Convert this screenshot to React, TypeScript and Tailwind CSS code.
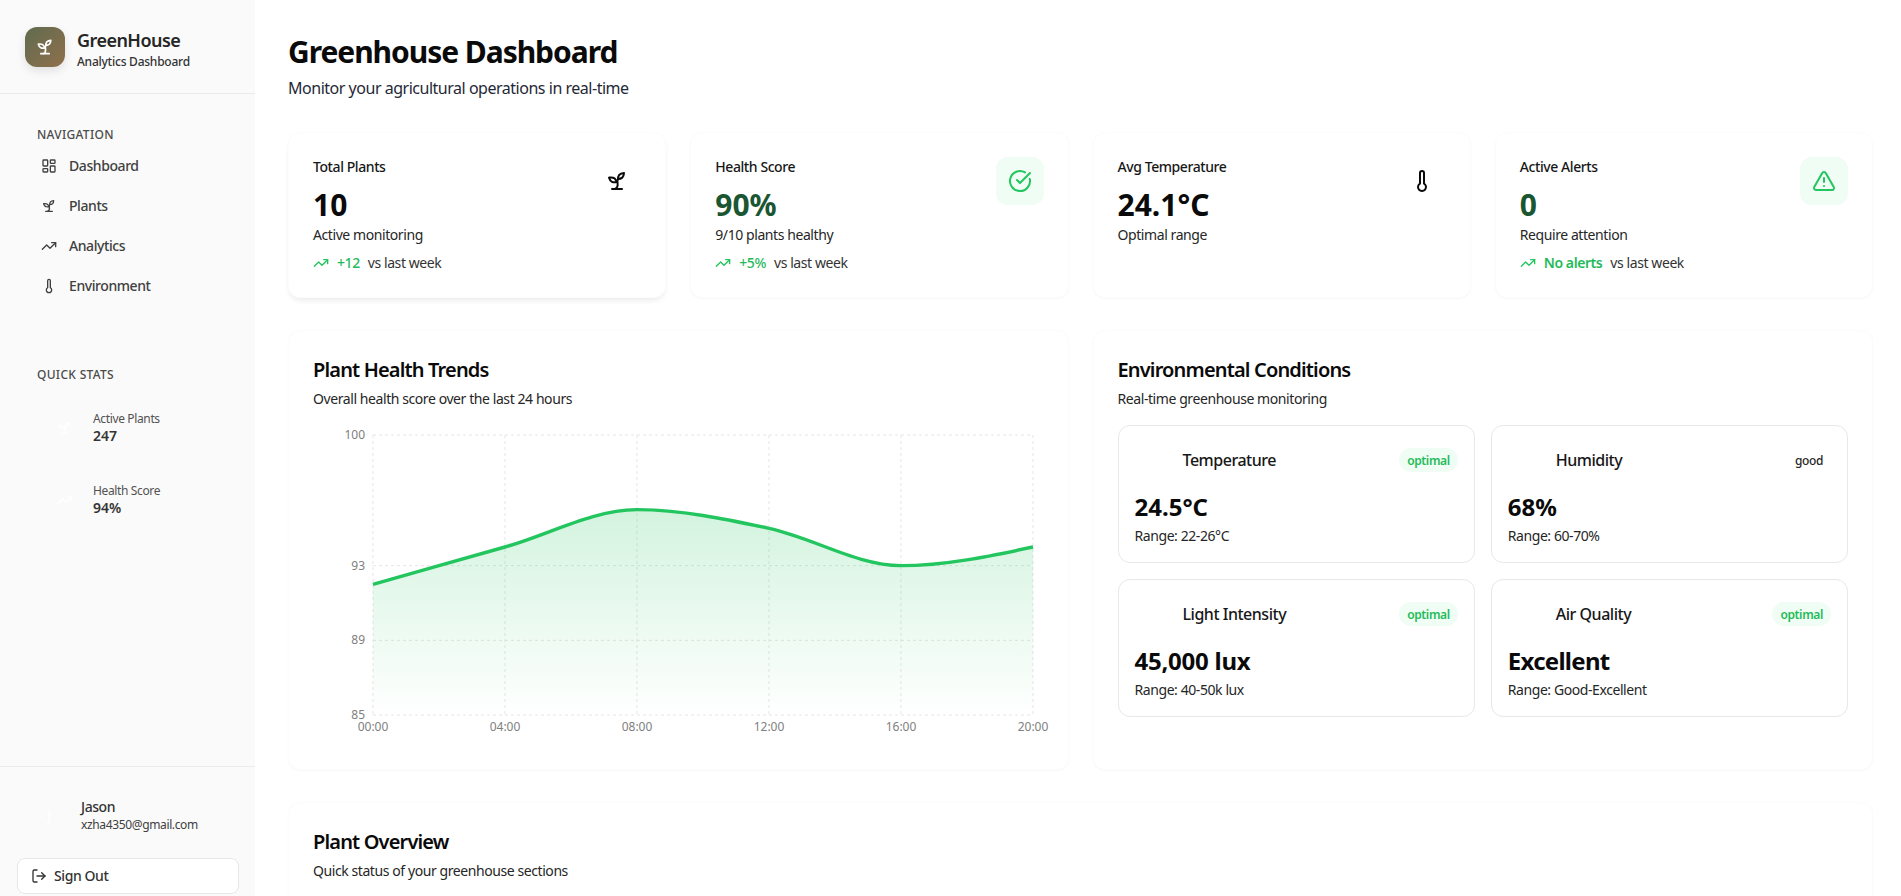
import React from "react";
import {
  LayoutDashboard,
  TrendingUp,
  Thermometer,
  CircleCheckBig,
  TriangleAlert,
  LogOut,
  Droplets,
  Sun,
  Wind,
} from "lucide-react";

function Sprout({ className }: { className?: string }) {
  return (
    <svg
      xmlns="http://www.w3.org/2000/svg"
      viewBox="0 0 24 24"
      fill="none"
      stroke="currentColor"
      strokeWidth="2"
      strokeLinecap="round"
      strokeLinejoin="round"
      className={className}
    >
      <path d="M7 20h10" />
      <path d="M10 20c5.5-2.5.8-6.4 3-10" />
      <path d="M9.5 9.4c1.1.8 1.8 2.2 2.3 3.7-2 .4-3.5.4-4.8-.3-1.2-.6-2.3-1.9-3-4.2 2.8-.5 4.4 0 5.5.8z" />
      <path d="M14.1 6a7 7 0 0 0-1.1 4c1.9-.1 3.3-.6 4.3-1.4 1-1 1.6-2.3 1.7-4.6-2.7.1-4 1-4.9 2z" />
    </svg>
  );
}

const nav = [
  { label: "Dashboard", Icon: LayoutDashboard },
  { label: "Plants", Icon: Sprout },
  { label: "Analytics", Icon: TrendingUp },
  { label: "Environment", Icon: Thermometer },
];

function StatCard({
  title,
  value,
  sub,
  green,
  Icon,
  boxed,
  trend,
  trendBold,
  raised,
}: {
  title: string;
  value: string;
  sub: string;
  green?: boolean;
  Icon: React.ComponentType<{ className?: string }>;
  boxed?: boolean;
  trend?: string;
  trendBold?: boolean;
  raised?: boolean;
}) {
  return (
    <div
      className={
        raised
          ? "flex h-[166px] justify-between rounded-xl border border-[#fcfcfc] bg-white p-6 shadow-[0_4px_6px_-2px_rgba(0,0,0,0.09)]"
          : "flex h-[166px] justify-between rounded-xl border border-[#fcfcfc] bg-white p-6 shadow-[0_1px_2px_rgba(0,0,0,0.03)]"
      }
    >
      <div>
        <div className="text-sm font-medium leading-5 text-[#171717]">{title}</div>
        <div
          className={
            green
              ? "mt-[10px] text-3xl font-bold leading-9 !tracking-normal text-[#1a5632]"
              : "mt-[10px] text-3xl font-bold leading-9 !tracking-normal text-[#0a0a0a]"
          }
        >
          {value}
        </div>
        <div className="mt-[2px] text-sm leading-5 text-[#262626]">{sub}</div>
        {trend && (
          <div className="mt-2 flex items-center text-sm leading-5">
            <TrendingUp className="h-4 w-4 text-[#22c55e]" />
            <span
              className={
                trendBold
                  ? "ml-2 font-semibold text-[#1fbb5a]"
                  : "ml-2 font-medium text-[#1fbb5a]"
              }
            >
              {trend}
            </span>
            <span className="ml-2 text-[#333333]">vs last week</span>
          </div>
        )}
      </div>
      <div
        className={
          boxed
            ? "flex h-12 w-12 items-center justify-center rounded-xl bg-[#f0fdf4] text-[#22c55e]"
            : "flex h-12 w-12 items-center justify-center rounded-xl text-[#0a0a0a]"
        }
      >
        <Icon className="h-6 w-6" />
      </div>
    </div>
  );
}

function EnvCard({
  label,
  value,
  range,
  status,
  Icon,
  valueClass,
}: {
  label: string;
  value: string;
  range: string;
  status: string;
  Icon: React.ComponentType<{ className?: string }>;
  valueClass: string;
}) {
  return (
    <div className="h-[138px] rounded-xl border border-[#e8e8e8] bg-white p-4">
      <div className="flex h-9 items-center justify-between">
        <div className="flex items-center gap-3">
          <div className="flex h-9 w-9 items-center justify-center text-white">
            <Icon className="h-5 w-5" />
          </div>
          <span className="text-base font-medium text-[#171717]">{label}</span>
        </div>
        <span
          className={
            status === "optimal"
              ? "rounded-full bg-[#f0fdf4] px-2 pb-[2px] pt-[4px] text-xs font-semibold leading-[18px] text-[#1fbb5a]"
              : "rounded-full px-2 pb-[2px] pt-[4px] text-xs font-medium leading-[18px] text-[#262626]"
          }
        >
          {status}
        </span>
      </div>
      <div className={valueClass}>{value}</div>
      <div className="mt-[3px] text-sm leading-5 text-[#262626]">{range}</div>
    </div>
  );
}

function Chart() {
  const xs = [373, 505, 637, 769, 901, 1033];
  const ys = [
    { y: 435, l: "100" },
    { y: 565.67, l: "93" },
    { y: 640.33, l: "89" },
    { y: 715, l: "85" },
  ];
  const times = ["00:00", "04:00", "08:00", "12:00", "16:00", "20:00"];
  const line =
    "M373,584.33C417,571.89,461,559.44,505,547C549,534.56,593,509.67,637,509.67C681,509.67,725,519,769,528.33C813,537.67,857,565.67,901,565.67C945,565.67,989,556.33,1033,547";
  return (
    <svg viewBox="313 425 731 320" className="block h-[320px] w-[731px] overflow-visible">
      <defs>
        <linearGradient id="healthFill" x1="0" y1="509" x2="0" y2="715" gradientUnits="userSpaceOnUse">
          <stop offset="0" stopColor="#22c55e" stopOpacity="0.2" />
          <stop offset="1" stopColor="#22c55e" stopOpacity="0" />
        </linearGradient>
      </defs>
      {xs.map((x) => (
        <line key={x} x1={x} x2={x} y1={435} y2={715} stroke="#e5e5e5" strokeDasharray="3 3" />
      ))}
      {ys.map((t) => (
        <line key={t.l} x1={373} x2={1033} y1={t.y} y2={t.y} stroke="#e5e5e5" strokeDasharray="3 3" />
      ))}
      <path d={`${line}L1033,715L373,715Z`} fill="url(#healthFill)" />
      <path d={line} fill="none" stroke="#22c55e" strokeWidth="3.4" />
      {ys.map((t) => (
        <text key={t.l} x={365} y={t.y + 4} textAnchor="end" fontSize="12" fill="#808080" className="!tracking-normal">
          {t.l}
        </text>
      ))}
      {times.map((t, i) => (
        <text key={t} x={xs[i]} y={731} textAnchor="middle" fontSize="12" fill="#808080" className="!tracking-normal">
          {t}
        </text>
      ))}
    </svg>
  );
}

export default function App() {
  return (
    <div className="flex h-screen overflow-hidden bg-white font-['Noto_Sans','Liberation_Sans',sans-serif] text-[#0a0a0a] [&_*]:tracking-[-0.03em]">
      <aside className="flex h-full w-[255px] shrink-0 flex-col bg-[#fafafa]">
        <div className="flex h-[94px] items-center gap-3 border-b border-[#ebebeb] px-[25px]">
          <div className="flex h-10 w-10 items-center justify-center rounded-xl bg-gradient-to-br from-[#5f6b4f] to-[#8f6f4c] shadow-[0_4px_10px_rgba(0,0,0,0.1)]">
            <Sprout className="h-5 w-5 text-white" />
          </div>
          <div className="pt-1">
            <div className="text-lg font-semibold leading-6 text-[#262626]">GreenHouse</div>
            <div className="mt-[2px] text-xs font-medium leading-4 !tracking-[-0.02em] text-[#333333]">Analytics Dashboard</div>
          </div>
        </div>

        <div className="px-[37px] pt-[33px]">
          <div className="text-xs font-medium uppercase leading-4 !tracking-wide text-[#4b4b4b]">Navigation</div>
          <div className="mt-[3px] flex flex-col">
            {nav.map(({ label, Icon }) => (
              <div key={label} className="flex h-10 items-center gap-3 pl-1">
                <Icon className="h-4 w-4 text-[#404040]" />
                <span className="text-sm font-medium text-[#404040]">{label}</span>
              </div>
            ))}
          </div>

          <div className="mt-[61px] text-xs font-medium uppercase leading-4 !tracking-wide text-[#4b4b4b]">
            Quick Stats
          </div>
          <div className="mt-[26px] flex flex-col gap-[35px]">
            <div className="flex items-center gap-3 pl-3">
              <div className="flex h-8 w-8 items-center justify-center text-white">
                <Sprout className="h-4 w-4" />
              </div>
              <div className="pt-[2px]">
                <div className="-mb-px text-xs leading-4 text-[#525252]">Active Plants</div>
                <div className="text-sm font-semibold leading-5 !tracking-normal text-[#333333]">247</div>
              </div>
            </div>
            <div className="flex items-center gap-3 pl-3">
              <div className="flex h-8 w-8 items-center justify-center text-white">
                <TrendingUp className="h-4 w-4" />
              </div>
              <div className="pt-[2px]">
                <div className="-mb-px text-xs leading-4 text-[#525252]">Health Score</div>
                <div className="text-sm font-semibold leading-5 !tracking-normal text-[#333333]">94%</div>
              </div>
            </div>
          </div>
        </div>

        <div className="mt-auto border-t border-[#ebebeb] px-[17px] pb-[2px] pt-[30px]">
          <div className="flex items-center gap-4 pl-4">
            <div className="flex h-8 w-8 items-center justify-center text-sm font-medium text-white">J</div>
            <div>
              <div className="text-sm font-medium leading-5 text-[#333333]">Jason</div>
              <div className="text-xs leading-4 text-[#404040]">xzha4350@gmail.com</div>
            </div>
          </div>
          <button className="mt-[25px] flex h-9 w-[222px] items-center gap-[7px] rounded-lg border border-[#e8e8e8] bg-white pl-[13px] text-sm font-medium text-[#333333]">
            <LogOut className="h-4 w-4" />
            <span>Sign Out</span>
          </button>
        </div>
      </aside>

      <main className="min-w-0 flex-1 pl-[33px] pr-7 pt-8">
        <h1 className="mt-[2px] text-3xl font-bold leading-9 !tracking-[-0.035em] text-[#0a0a0a]">Greenhouse Dashboard</h1>
        <p className="mt-[6px] text-base leading-6 text-[#1f2937]">Monitor your agricultural operations in real-time</p>

        <div className="mt-8 grid grid-cols-4 gap-6">
          <StatCard raised title="Total Plants" value="10" sub="Active monitoring" Icon={Sprout} trend="+12" />
          <StatCard green boxed title="Health Score" value="90%" sub="9/10 plants healthy" Icon={CircleCheckBig} trend="+5%" />
          <StatCard title="Avg Temperature" value="24.1°C" sub="Optimal range" Icon={Thermometer} />
          <StatCard green boxed title="Active Alerts" value="0" sub="Require attention" Icon={TriangleAlert} trend="No alerts" trendBold />
        </div>

        <div className="mt-8 grid grid-cols-2 gap-6">
          <section className="h-[440px] rounded-xl border border-[#fcfcfc] bg-white p-6 shadow-[0_1px_2px_rgba(0,0,0,0.03)]">
            <h2 className="mt-px text-xl font-semibold leading-7 !tracking-[-0.042em] text-[#0a0a0a]">Plant Health Trends</h2>
            <p className="mt-[5px] text-sm leading-5 text-[#262626]">Overall health score over the last 24 hours</p>
            <div className="mt-4">
              <Chart />
            </div>
          </section>
          <section className="h-[440px] rounded-xl border border-[#fcfcfc] bg-white p-6 shadow-[0_1px_2px_rgba(0,0,0,0.03)]">
            <h2 className="mt-px text-xl font-semibold leading-7 !tracking-[-0.042em] text-[#0a0a0a]">Environmental Conditions</h2>
            <p className="mt-[5px] text-sm leading-5 text-[#262626]">Real-time greenhouse monitoring</p>
            <div className="mt-4 grid grid-cols-2 gap-4">
              <EnvCard
                label="Temperature"
                value="24.5°C"
                range="Range: 22-26°C"
                status="optimal"
                Icon={Thermometer}
                valueClass="mt-[13px] text-2xl font-bold leading-8 !tracking-normal text-[#0a0a0a]"
              />
              <EnvCard
                label="Humidity"
                value="68%"
                range="Range: 60-70%"
                status="good"
                Icon={Droplets}
                valueClass="mt-[13px] text-2xl font-bold leading-8 !tracking-normal text-[#0a0a0a]"
              />
              <EnvCard
                label="Light Intensity"
                value="45,000 lux"
                range="Range: 40-50k lux"
                status="optimal"
                Icon={Sun}
                valueClass="mt-[13px] text-2xl font-bold leading-8 !tracking-[-0.01em] text-[#0a0a0a]"
              />
              <EnvCard
                label="Air Quality"
                value="Excellent"
                range="Range: Good-Excellent"
                status="optimal"
                Icon={Wind}
                valueClass="mt-[13px] text-2xl font-bold leading-8 text-[#0a0a0a]"
              />
            </div>
          </section>
        </div>

        <section className="mt-8 h-[240px] rounded-xl border border-[#fcfcfc] bg-white p-6 shadow-[0_1px_2px_rgba(0,0,0,0.03)]">
          <h2 className="mt-px text-xl font-semibold leading-7 !tracking-[-0.042em] text-[#0a0a0a]">Plant Overview</h2>
          <p className="mt-[5px] text-sm leading-5 text-[#262626]">Quick status of your greenhouse sections</p>
        </section>
      </main>
    </div>
  );
}
